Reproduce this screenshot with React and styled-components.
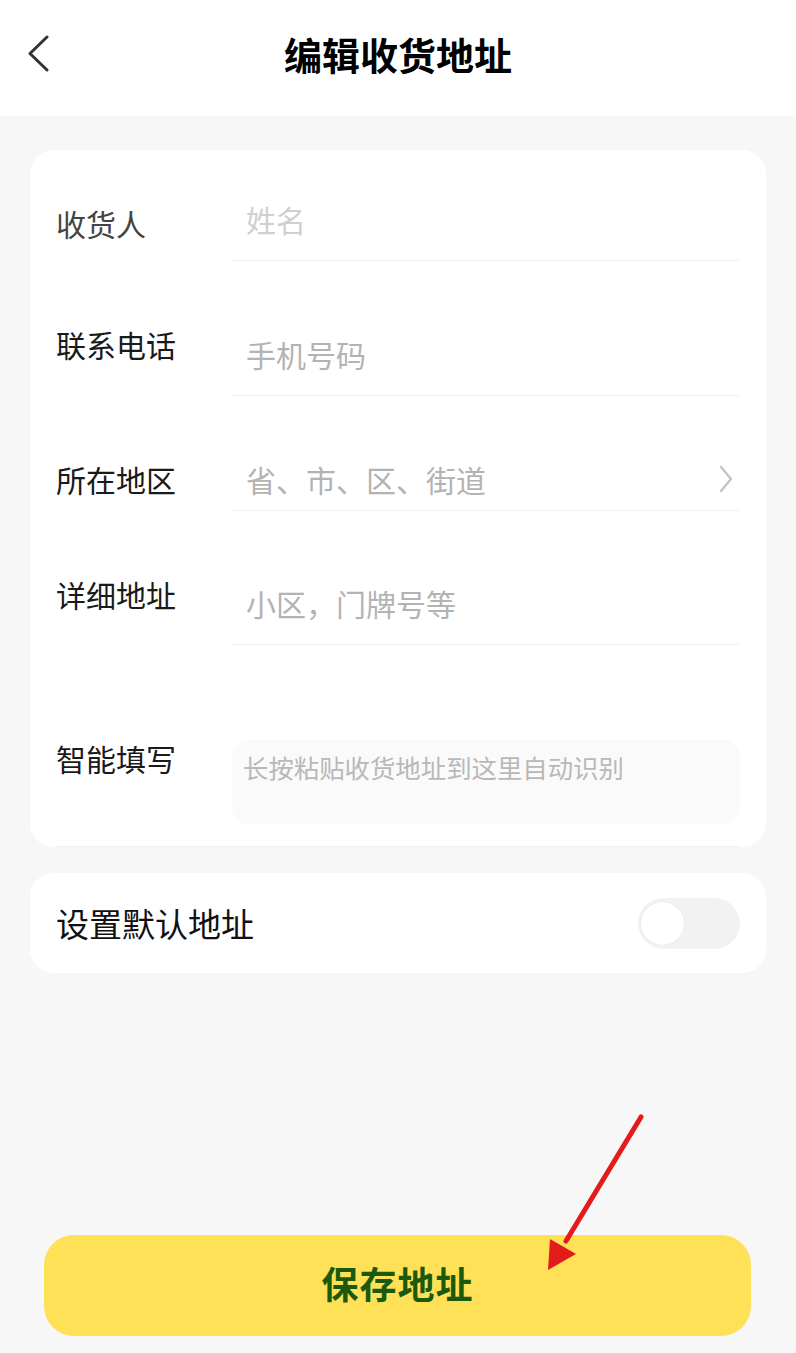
import React from "react"
import styled, { createGlobalStyle } from "styled-components"

const GlobalStyle = createGlobalStyle`
  * {
    box-sizing: border-box;
  }
  body {
    margin: 0;
    background-color: #f7f7f7;
    font-family: "Noto Sans CJK SC", "Noto Sans", sans-serif;
  }
`

const rows = [
  { label: "收货人", placeholder: "姓名", height: 111, labelTop: 53, pad: 21, muted: true, light: true },
  { label: "联系电话", placeholder: "手机号码", height: 135, labelTop: 63, pad: 21 },
  { label: "所在地区", placeholder: "省、市、区、街道", height: 115, labelTop: 63, pad: 11, select: true },
  { label: "详细地址", placeholder: "小区，门牌号等", height: 134, labelTop: 63, pad: 21 },
]

const App = () => {
  return (
    <>
      <GlobalStyle />
      <Page>
        <Header>
          <BackButton aria-label="返回">
            <svg width="24" height="40" viewBox="0 0 24 40" fill="none">
              <path d="M21 2 L4 18.5 L21 35" stroke="#333" strokeWidth="3" strokeLinecap="round" strokeLinejoin="round" />
            </svg>
          </BackButton>
          <Title>编辑收货地址</Title>
          <span />
        </Header>

        <Card>
          {rows.map((row) => (
            <Row key={row.label} $height={row.height}>
              <Label $top={row.labelTop} $muted={row.muted}>
                {row.label}
              </Label>
              <Field $pad={row.pad}>
                <Input placeholder={row.placeholder} readOnly={row.select} $light={row.light} />
                {row.select && (
                  <svg width="16" height="28" viewBox="0 0 16 28" fill="none">
                    <path d="M3 2 L13 14 L3 26" stroke="#c4c4c4" strokeWidth="2.4" strokeLinecap="round" strokeLinejoin="round" />
                  </svg>
                )}
              </Field>
            </Row>
          ))}
          <SmartRow>
            <Label $top={93}>智能填写</Label>
            <SmartBox placeholder="长按粘贴收货地址到这里自动识别" />
          </SmartRow>
        </Card>

        <DefaultCard>
          <DefaultLabel>设置默认地址</DefaultLabel>
          <Toggle type="button" aria-label="设置默认地址">
            <Knob />
          </Toggle>
        </DefaultCard>

        <Footer>
          <SaveButton type="button">保存地址</SaveButton>
          <Pointer width="110" height="170" viewBox="0 0 110 170">
            <line x1="97" y1="4" x2="22" y2="128" stroke="#e31b1b" strokeWidth="5" strokeLinecap="round" />
            <polygon points="4,157 6,126 32,141" fill="#e31b1b" />
          </Pointer>
        </Footer>
      </Page>
    </>
  )
}

const Page = styled.div`
  min-height: 100vh;
  display: flex;
  flex-direction: column;
  background-color: #f7f7f7;
`

const Header = styled.header`
  height: 116px;
  background-color: #fff;
  display: grid;
  grid-template-columns: 90px 1fr 90px;
  align-items: center;
  padding-bottom: 10px;
`

const BackButton = styled.button`
  border: 0;
  background: none;
  padding: 4px 0 0 26px;
  display: flex;
  align-items: center;
  cursor: pointer;
`

const Title = styled.h1`
  margin: 0;
  text-align: center;
  font-size: 38px;
  font-weight: 700;
  color: #000;
`

const Card = styled.section`
  margin: 34px 30px 0;
  padding: 0 26px;
  background-color: #fff;
  border-radius: 24px;
`

const Row = styled.div`
  display: flex;
  height: ${(p) => p.$height}px;
`

const Label = styled.div`
  width: 176px;
  flex-shrink: 0;
  margin-top: ${(p) => p.$top}px;
  font-size: 30px;
  line-height: 40px;
  color: ${(p) => (p.$muted ? "#444" : "#1a1a1a")};
`

const Field = styled.div`
  flex: 1;
  display: flex;
  align-items: flex-end;
  gap: 8px;
  padding: 0 6px ${(p) => p.$pad}px 14px;
  border-bottom: 1.5px solid #f1f1f1;

  svg {
    flex-shrink: 0;
    margin-bottom: 6px;
  }
`

const Input = styled.input`
  flex: 1;
  min-width: 0;
  border: 0;
  outline: none;
  padding: 0;
  background: transparent;
  font-family: inherit;
  font-size: 30px;
  line-height: 40px;
  height: 40px;
  color: #333;

  &::placeholder {
    color: ${(p) => (p.$light ? "#cfcfcf" : "#b3b3b3")};
  }
`

const SmartRow = styled.div`
  display: flex;
  align-items: flex-start;
  padding-bottom: 22px;
  border-bottom: 1.5px solid #f1f1f1;
`

const SmartBox = styled.textarea`
  flex: 1;
  height: 84px;
  margin-top: 95px;
  border: 0;
  outline: none;
  resize: none;
  border-radius: 16px;
  background-color: #fafafa;
  padding: 7px 11px;
  font-family: inherit;
  font-size: 25.4px;
  line-height: 40px;
  color: #333;

  &::placeholder {
    color: #b8b8b8;
  }
`

const DefaultCard = styled.section`
  margin: 26px 30px 0;
  height: 100px;
  padding: 0 26px;
  background-color: #fff;
  border-radius: 24px;
  display: flex;
  align-items: center;
  justify-content: space-between;
`

const DefaultLabel = styled.span`
  font-size: 33px;
  line-height: 40px;
  color: #111;
`

const Toggle = styled.button`
  width: 102px;
  height: 51px;
  border: 0;
  padding: 3px;
  border-radius: 26px;
  background-color: #f2f2f2;
  display: flex;
  align-items: center;
  cursor: pointer;
`

const Knob = styled.span`
  width: 43px;
  height: 43px;
  border-radius: 50%;
  background-color: #fff;
  box-shadow: 0 0 2px rgba(0, 0, 0, 0.08);
`

const Footer = styled.div`
  margin-top: auto;
  padding: 0 45px 17px 44px;
  position: relative;
`

const SaveButton = styled.button`
  width: 100%;
  height: 101px;
  border: 0;
  border-radius: 30px;
  padding: 0 0 5px;
  background-color: #ffe158;
  font-family: inherit;
  font-size: 37px;
  font-weight: 700;
  color: #1b5a0c;
  letter-spacing: 1px;
  cursor: pointer;
`

const Pointer = styled.svg`
  position: absolute;
  left: 544px;
  top: -122px;
  pointer-events: none;
`

export default App
